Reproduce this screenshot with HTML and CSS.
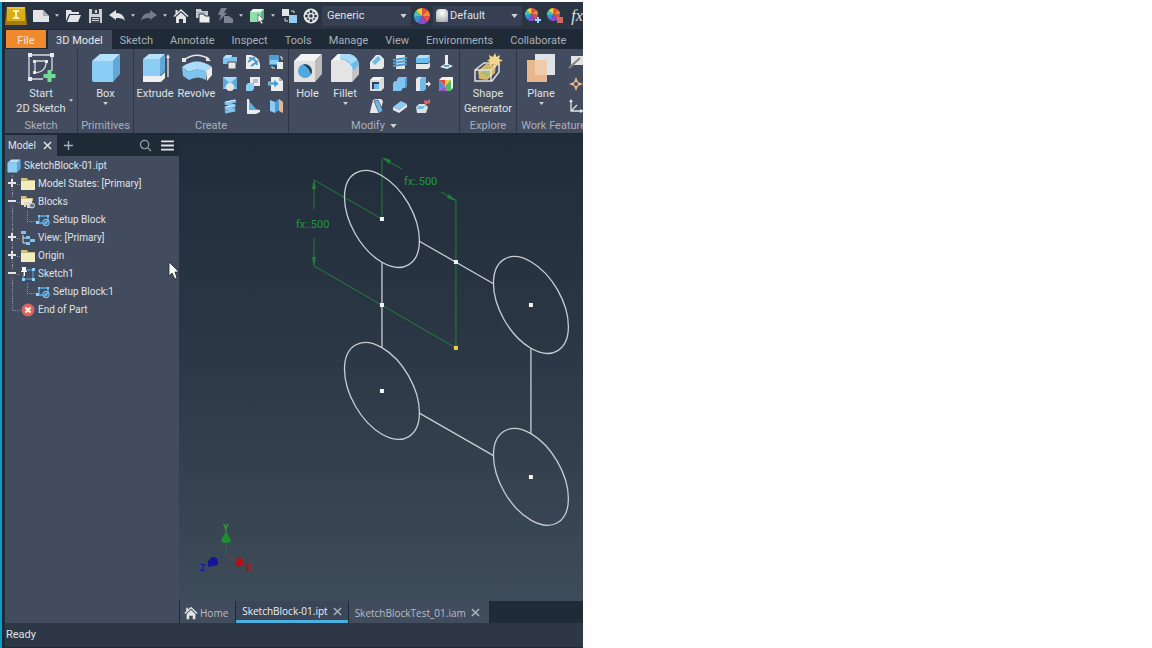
FILE: index.html
```html
<!DOCTYPE html>
<html lang="en">
<head>
<meta charset="utf-8">
<title>SketchBlock-01.ipt</title>
<link rel="stylesheet" href="styles.css">
</head>
<body>
<svg class="defs" aria-hidden="true">
  <defs>
    <symbol id="wheel" viewBox="0 0 16 16">
      <path fill="#e8503c" d="M8 8V0a8 8 0 0 1 5.700 2.300z"/><path fill="#f08a3c" d="M8 8l5.700-5.700A8 8 0 0 1 16 8z"/><path fill="#e84a50" d="M8 8h8a8 8 0 0 1-3 6.200z"/><path fill="#8c4cc8" d="M8 8l5 6.200A8 8 0 0 1 4 15z"/><path fill="#3c8ce0" d="M8 8l-4 7a8 8 0 0 1-4-6z"/><path fill="#3cc8c0" d="M8 8L0 9a8 8 0 0 1 2-6.300z"/><path fill="#f4d03c" d="M8 8L2 2.700A8 8 0 0 1 8 0z"/>
    </symbol>
    <symbol id="cube" viewBox="0 0 30 30">
      <path fill="#b5e2fb" d="M1 8l8-7h20l-7 7z"/><path fill="#8bcdf5" d="M1 8h21v21H3q-2 0-2-2z"/><path fill="#5fa9d8" d="M22 8l7-7v20l-7 8z"/>
    </symbol>
    <symbol id="house" viewBox="0 0 16 16">
      <path fill="none" stroke="#e2e4e6" stroke-width="1.600" d="M1 8.500L8 2l7 6.500"/><path fill="#e2e4e6" d="M3 9l5-4.500L13 9v6h-3v-4H6v4H3zM2.500 2h2v3l-2 2z"/>
    </symbol>
    <symbol id="folder" viewBox="0 0 14 14">
      <path fill="#cdbf80" d="M0 1h6l1 2h7v10H0z"/><path fill="#f3ecbc" d="M0 4h14v9H0z"/>
    </symbol>
    <symbol id="block" viewBox="0 0 14 14">
      <path fill="none" stroke="#55aee6" stroke-width="1.300" d="M3 9V3h9v4M2 10h5"/><path fill="#8fd0f8" d="M0 8h3v3H0zM2 2h2v2H2zM11 2h2v2h-2z"/><circle cx="10" cy="9.500" r="3.300" fill="#3c7fb0" stroke="#7fc4ee"/><path stroke="#d8eefa" d="M8 11.500l4-4"/>
    </symbol>
    <symbol id="caret" viewBox="0 0 8 5"><path fill="#cfd3d8" d="M0 0h8L4 5z"/></symbol>
    <symbol id="cross" viewBox="0 0 10 10"><path fill="none" stroke="currentColor" stroke-width="1.600" d="M1 1l8 8M9 1L1 9"/></symbol>
  </defs>
</svg>

<div class="app">
  <header class="quickbar">
    <button class="logo" aria-label="Application menu"><svg viewBox="0 0 22 20"><path fill="#a67c12" d="M2 1h18l2 18H0z"/><path fill="#d9ad17" d="M2 1h18v14H2z"/><path fill="#efc62d" d="M2 1h18v2H2z"/><path fill="#fff3b8" d="M8 4h6v2h-2v5h2v2H8v-2h2V6H8z"/></svg></button>
    <button class="tool" aria-label="New"><svg viewBox="0 0 16 16"><path fill="#e2e4e6" d="M0 2h10l6 6v6H0z"/><path fill="#a9afb8" d="M10 2v6h6z"/></svg></button>
    <button class="drop" aria-label="New options"><svg><use href="#caret"/></svg></button>
    <button class="tool" aria-label="Open"><svg viewBox="0 0 16 16"><path fill="#e2e4e6" d="M1 13V2h5l1 2h7v2H4zM2 14l3-7h11l-3 7z"/></svg></button>
    <button class="tool" aria-label="Save"><svg viewBox="0 0 16 16"><path fill="#ccd0d5" d="M2 1h13v14H2z"/><path fill="#3a4454" d="M5 1h7v5H5zM4 9h9v6H4z"/><path fill="#ccd0d5" d="M8 2h2v3H8zM5 10h7v1H5zM5 12h7v1H5z"/></svg></button>
    <button class="tool" aria-label="Undo"><svg viewBox="0 0 16 16"><path fill="#e2e4e6" d="M0 7l7-5v3c6 0 8 3 9 8-2-3-5-3-9-3v2z"/></svg></button>
    <button class="drop" aria-label="Undo options"><svg><use href="#caret"/></svg></button>
    <button class="tool" aria-label="Redo"><svg viewBox="0 0 16 16"><path fill="#747c88" d="M16 7L9 2v3c-6 0-8 3-9 8 2-3 5-3 9-3v2z"/></svg></button>
    <button class="drop" aria-label="Redo options"><svg><use href="#caret"/></svg></button>
    <button class="tool" aria-label="Home"><svg><use href="#house"/></svg></button>
    <button class="tool" aria-label="Project folders"><svg viewBox="0 0 16 16"><path fill="#c6cbd1" d="M1 1h5l1 2h6v7H1z"/><path fill="#eceef0" stroke="#2c3645" d="M4 6h5l1 2h5v7H4z"/><path fill="#a4acb6" d="M1 4h10v1H1z"/></svg></button>
    <button class="tool" aria-label="Update"><svg viewBox="0 0 16 16"><path fill="#7b838f" d="M4 0h6L7 5h3L2 13l2-6H1zM7 8h5l4 3v4H7z"/></svg></button>
    <button class="drop" aria-label="Update options"><svg><use href="#caret"/></svg></button>
    <button class="tool" aria-label="Select"><svg viewBox="0 0 16 16"><path fill="#55b878" d="M1 4l3-3h11v10l-3 3H1z"/><path fill="#8fe0a8" d="M1 4h11v10H1z"/><path fill="#e6f6ea" d="M1 4l3-3h11l-3 3z"/><path fill="#fff" stroke="#36404f" stroke-width=".6" d="M9 6l6 6h-3l2 3-2 1-1-3-2 1z"/></svg></button>
    <button class="drop" aria-label="Select options"><svg><use href="#caret"/></svg></button>
    <button class="tool" aria-label="Components"><svg viewBox="0 0 16 16"><path fill="#e2e4e6" d="M1 1h7v7H1z"/><path fill="#93cdf2" d="M8 7h8v8H8z"/><path fill="none" stroke="#d8dce0" d="M4 10v3h3M10 3h3v2"/></svg></button>
    <button class="tool" aria-label="Material browser"><svg viewBox="0 0 16 16"><circle cx="8" cy="8" r="7.500" fill="#e2e4e6"/><g fill="#2d3746"><circle cx="8" cy="8" r="1.700"/><circle cx="8" cy="3.500" r="1.500"/><circle cx="8" cy="12.500" r="1.500"/><circle cx="3.500" cy="8" r="1.500"/><circle cx="12.500" cy="8" r="1.500"/><circle cx="5" cy="5" r="1"/><circle cx="11" cy="5" r="1"/><circle cx="5" cy="11" r="1"/><circle cx="11" cy="11" r="1"/></g></svg></button>
    <span class="combo"><select aria-label="Material"><option>Generic</option></select><svg><use href="#caret"/></svg></span>
    <button class="tool" aria-label="Appearance browser"><svg><use href="#wheel"/></svg></button>
    <span class="combo combo-swatch"><i class="swatch"></i><select aria-label="Appearance"><option>Default</option></select><svg><use href="#caret"/></svg></span>
    <button class="tool" aria-label="Adjust appearance"><svg viewBox="0 0 16 16"><use href="#wheel" width="13" height="13"/><path stroke="#9ed4f6" stroke-width="2" d="M13 9v6M10 12h6"/></svg></button>
    <button class="tool" aria-label="Clear appearance"><svg viewBox="0 0 16 16"><use href="#wheel" width="13" height="13"/><path fill="#cf6a60" d="M10 9h6v6h-6z"/></svg></button>
    <button class="tool fx" aria-label="Parameters">fx</button>
  </header>

  <nav class="tabs">
    <a class="tab file" href="#file">File</a>
    <a class="tab current" href="#model">3D Model</a>
    <a class="tab" href="#sketch">Sketch</a>
    <a class="tab" href="#annotate">Annotate</a>
    <a class="tab" href="#inspect">Inspect</a>
    <a class="tab" href="#tools">Tools</a>
    <a class="tab" href="#manage">Manage</a>
    <a class="tab" href="#view">View</a>
    <a class="tab" href="#environments">Environments</a>
    <a class="tab" href="#collaborate">Collaborate</a>
    <a class="tab" href="#inventor">Electromechanical</a>
  </nav>

  <section class="ribbon">
    <div class="panel p-sketch">
      <div class="body">
        <button class="big"><svg viewBox="0 0 30 30"><g fill="none" stroke="#d9dce0" stroke-width="1.300"><path d="M4 2h22v16M3 4v22h14"/><path d="M9 8h11v3q-1 8-11 9z"/></g><path fill="#e8eaec" d="M2 0h4v4H2zM24 0h4v4h-4zM2 24h4v4H2zM7 7h3v3H7zM19 7h3v3h-3zM7 18h3v3H7z"/><path stroke="#6fdc94" stroke-width="4" d="M23.500 17v12M17.500 23h12"/></svg><span>Start<br>2D Sketch</span></button>
        <svg class="side-caret"><use href="#caret"/></svg>
      </div>
      <div class="name">Sketch</div>
    </div>
    <div class="panel p-prim">
      <div class="body">
        <button class="big"><svg><use href="#cube"/></svg><span>Box</span><svg class="down"><use href="#caret"/></svg></button>
      </div>
      <div class="name">Primitives</div>
    </div>
    <div class="panel p-create">
      <div class="body">
        <button class="big w40"><svg viewBox="0 0 30 30"><path fill="#efefef" d="M3 23h18l4-4v6l-4 4H3z"/><path fill="#b5e2fb" d="M3 6l6-5h16l-5 5z"/><path fill="#8bcdf5" d="M3 6h17v17H3z"/><path fill="#5fa9d8" d="M20 6l5-5v17l-5 5z"/><path stroke="#e6e8ea" stroke-width="1.300" d="M28 4v20"/><path fill="#e6e8ea" d="M26 5l2-4 2 4z"/></svg><span>Extrude</span></button>
        <button class="big w43"><svg viewBox="0 0 30 30"><path fill="none" stroke="#e6e8ea" stroke-width="1.500" d="M2 7Q14-2 27 6"/><path fill="#e6e8ea" d="M0 5h4v4H0zM24 3l5 5-5 0z"/><path fill="#a9dcfa" d="M0 14q15-11 30 0l-6 5q-9-5-17 0z"/><path fill="#7fc4ee" d="M0 14l7 5q8-5 17 0v8q-8-5-17 0l-6-4z"/><path fill="#ececec" d="M24 18l6-4v8l-5 6z"/></svg><span>Revolve</span></button>
        <div class="grid">
          <button class="mini" aria-label="Sweep"><svg viewBox="0 0 16 16"><path fill="#7fc4ee" d="M1 4l3-3h6v2h5v5l-2 2H1z"/><path fill="#b5e2fb" d="M1 4l3-3h6L8 4z"/><path fill="#e8e8e8" stroke="#434c5f" d="M6 8h8v7H6z"/></svg></button>
          <button class="mini" aria-label="Emboss"><svg viewBox="0 0 16 16"><path fill="#ececec" d="M1 1h5q8 2 9 9v5H1z"/><path fill="none" stroke="#4a9ed2" stroke-width="2" d="M4 4q7 0 8 7M3 8l7-5M6 12l7-5"/></svg></button>
          <button class="mini" aria-label="Derive"><svg viewBox="0 0 16 16"><path fill="#4a9ed2" d="M1 1h10v10H1z"/><path fill="#8bcdf5" d="M2 6h8v4H2z"/><path fill="#ececec" d="M9 8h6v7H9z"/><path fill="none" stroke="#e6e8ea" d="M12 3h2v3M4 12v2h3"/></svg></button>
          <button class="mini" aria-label="Loft"><svg viewBox="0 0 16 16"><path fill="#8bcdf5" d="M1 1h14v12H1z"/><path fill="#5fa9d8" d="M1 1l7 7 7-7v12l-3-3H4l-3 3z"/><path fill="#a9dcfa" d="M1 1h14L8 6z"/><circle cx="8" cy="11" r="4" fill="#e4e4e4"/></svg></button>
          <button class="mini" aria-label="Decal"><svg viewBox="0 0 16 16"><path fill="#ececec" d="M5 1h10v9H9V7H5z"/><path fill="#8bcdf5" d="M1 9l2-2h6v6l-2 2H1z"/><path fill="#b9bec6" d="M8 3h5v4H8z"/></svg></button>
          <button class="mini" aria-label="Import"><svg viewBox="0 0 16 16"><path fill="#ececec" d="M3 1h8l4 4v10H3z"/><path fill="#a9afb8" d="M11 1v4h4z"/><path fill="#4a9ed2" stroke="#fff" stroke-width=".5" d="M0 6h6V3l5 5-5 4V9H0z"/></svg></button>
          <button class="mini" aria-label="Coil"><svg viewBox="0 0 16 16"><path fill="none" stroke="#7fc4ee" stroke-width="3" d="M14 3L3 5l10 3-10 2 10 2-10 2"/><path stroke="#d9f0fd" d="M13 2L4 4M13 7L4 9"/></svg></button>
          <button class="mini" aria-label="Rib"><svg viewBox="0 0 16 16"><path fill="#ececec" d="M2 1h2l2 10 9 1v2l-4 2H2z"/><path fill="#5fb0e2" d="M4 3l8 9H4z"/></svg></button>
          <button class="mini" aria-label="Unwrap"><svg viewBox="0 0 16 16"><path fill="#8bcdf5" d="M2 2l5 2v11l-5-2z"/><path fill="#4a9ed2" d="M7 4l4-3v11l-4 3z"/><path fill="#e9b78e" d="M11 1l4 3v11l-4-2z"/></svg></button>
        </div>
      </div>
      <div class="name">Create</div>
    </div>
    <div class="panel p-modify">
      <div class="body">
        <button class="big w34"><svg viewBox="0 0 30 30"><path fill="#f4f4f4" d="M1 8l7-7h21l-7 7z"/><path fill="#e2e2e2" d="M1 8h21v21H1z"/><path fill="#bcbcbc" d="M22 8l7-7v20l-7 8z"/><circle cx="12" cy="18" r="7" fill="#4fa8de"/><path fill="#2a3c52" d="M10 11.500a7 7 0 0 1 8 10q-2-7-8-10z"/></svg><span>Hole</span></button>
        <button class="big w41"><svg viewBox="0 0 30 30"><path fill="#e4e4e4" d="M1 8l7-7h10q10 2 11 11v9l-7 8H1z"/><path fill="#c4c4c4" d="M22 18l7-6v9l-7 8z"/><path fill="#f2f2f2" d="M1 8l7-7h6l-4 6z"/><path fill="#6fbcec" d="M11 1h8q9 2 10 11l-6 6Q22 8 10 6z"/><path fill="#a9dcfa" d="M11 1h8q6 1 8 6l-6 4Q18 6 10 6z"/></svg><span>Fillet</span><svg class="down"><use href="#caret"/></svg></button>
        <div class="grid four">
          <button class="mini" aria-label="Chamfer"><svg viewBox="0 0 16 16"><path fill="#e8e8e8" d="M1 8l6-7h4l4 4v8l-2 2H1z"/><path fill="#6fbcec" d="M3 8l6-6 3 3-6 6z"/></svg></button>
          <button class="mini" aria-label="Thread"><svg viewBox="0 0 16 16"><path fill="#e4e4e4" d="M4 1h9v14H4z"/><path stroke="#4a9ed2" stroke-width="2" d="M1 6l14-2M1 9l14-2M1 12l14-2"/></svg></button>
          <button class="mini" aria-label="Split"><svg viewBox="0 0 16 16"><path fill="#b5e2fb" d="M1 4l3-3h11l-2 3z"/><path fill="#6fbcec" d="M1 4h12l2-3v6l-2 2H1z"/><path fill="#e8e8e8" d="M1 10h12l2-2v5l-2 2H1z"/></svg></button>
          <button class="mini" aria-label="Direct edit"><svg viewBox="0 0 16 16"><path fill="#ececec" d="M7 1h3v9l5 2-6 3-7-2 5-3z"/><path fill="#4a9ed2" d="M6 11h5v2H6z"/></svg></button>
          <button class="mini" aria-label="Shell"><svg viewBox="0 0 16 16"><path fill="#f2f2f2" d="M1 4l3-3h11l-3 3z"/><path fill="#dcdcdc" d="M1 4h11v11H1zM12 4l3-3v11l-3 3z"/><path fill="#2f4258" d="M3 6h7v7H3z"/><path fill="#6fbcec" d="M5 8h5v5H5z"/></svg></button>
          <button class="mini" aria-label="Combine"><svg viewBox="0 0 16 16"><path fill="#7fc4ee" d="M5 3l2-2h8v9l-2 2h-2l-2 3H1V7l2-2h2z"/><path fill="#4a9ed2" d="M13 3l2-2v9l-2 2z"/></svg></button>
          <button class="mini" aria-label="Move face"><svg viewBox="0 0 16 16"><path fill="#e8e8e8" d="M1 3l2-2h4v12l-2 2H1z"/><path fill="#6fbcec" d="M5 3l2-2h4v12l-2 2H5z"/><path fill="#ececec" d="M11 7h2V5l3 3-3 3V9h-2z"/></svg></button>
          <button class="mini" aria-label="Finish"><svg viewBox="0 0 16 16"><path fill="#f2f2f2" d="M1 4l3-3h11v11l-3 3H1z"/><path fill="#e84a3c" d="M1 4h6v6z"/><path fill="#f4c83c" d="M7 4h6l-6 6z"/><path fill="#4a90e0" d="M1 4l6 6-6 5z"/><path fill="#a650c8" d="M1 15l6-5 2 5z"/><path fill="#52bc62" d="M13 4v11H9l-2-5z"/></svg></button>
          <button class="mini" aria-label="Draft"><svg viewBox="0 0 16 16"><path fill="#e8e8e8" d="M1 14L4 2l3-1h5l2 2-3 12H1z"/><path fill="#6fbcec" stroke="#33465d" stroke-width=".7" d="M5 3l4-1 5 11-4 2z"/></svg></button>
          <button class="mini" aria-label="Thicken"><svg viewBox="0 0 16 16"><path fill="#8bcdf5" d="M1 9l8-6 6 3-8 6z"/><path fill="#e8e8e8" d="M1 9l6 3 8-6v3l-8 6-6-3z"/></svg></button>
          <button class="mini" aria-label="Delete face"><svg viewBox="0 0 16 16"><path fill="#e0e0e0" d="M1 9l3-3h6l3 3-2 6H2z"/><path fill="#6fbcec" d="M3 8h7l-2 3H2z"/><path fill="#d9695e" d="M9 2l3 1 3-2v5l-2-1-3 3z"/></svg></button>
        </div>
      </div>
      <div class="name">Modify <svg class="name-caret"><use href="#caret"/></svg></div>
    </div>
    <div class="panel p-explore">
      <div class="body">
        <button class="big"><svg viewBox="0 0 30 30"><path fill="#d9b86a" d="M5 18l8-7 10 1-1 8-8 7-8-1z"/><path fill="#a8c070" d="M8 20l6-6 5 5-5 5z"/><path fill="none" stroke="#dfe2e6" stroke-width="1.500" d="M2 17l9-7h15v9l-7 9H2zM2 17h16l8-7M18 17v11"/><path fill="#f6d78e" d="M22 0l1.500 4L27 2l-1 4 4 1.500L26 9l1 4-4-2-1.500 3L20 11l-4 2 1-4-3-1.500L17 6l-1-4 4 2z"/></svg><span>Shape<br>Generator</span></button>
      </div>
      <div class="name">Explore</div>
    </div>
    <div class="panel p-work">
      <div class="body">
        <button class="big w48"><svg viewBox="0 0 30 30"><path fill="#dfe2e6" d="M9 1h20v21H9z"/><path fill="#e9b78e" d="M1 7h20v22H1z"/><path fill="#f0cdaa" d="M9 7h12v15H9z"/></svg><span>Plane</span><svg class="down"><use href="#caret"/></svg></button>
        <div class="grid one">
          <button class="mini" aria-label="Axis"><svg viewBox="0 0 16 16"><path fill="#e0e3e6" d="M3 2h13v9H3z"/><path stroke="#8d857b" stroke-width="2" d="M1 14L12 4"/></svg></button>
          <button class="mini" aria-label="Point"><svg viewBox="0 0 16 16"><path fill="#eebc8c" d="M8 1l2 5 5 2-5 2-2 5-2-5-5-2 5-2z"/><circle cx="8" cy="8" r="2" fill="#434c5f"/></svg></button>
          <button class="mini" aria-label="Coordinate system"><svg viewBox="0 0 16 16"><path fill="none" stroke="#e0e3e6" stroke-width="1.300" d="M3 2v11h11M3 13l6-6"/><path fill="#e0e3e6" d="M1 4l2-3 2 3zM12 11l4 2-4 2z"/></svg></button>
        </div>
      </div>
      <div class="name">Work Features</div>
    </div>
  </section>

  <div class="workspace">
    <aside class="browser">
      <div class="browser-head">
        <div class="browser-tab">Model<button aria-label="Close Model panel"><svg><use href="#cross"/></svg></button></div>
        <button class="add" aria-label="Add panel"><svg viewBox="0 0 10 10"><path stroke="#a9afb8" stroke-width="1.500" d="M5 0v10M0 5h10"/></svg></button>
        <button class="find" aria-label="Search"><svg viewBox="0 0 14 14"><circle cx="6" cy="6" r="4.500" fill="none" stroke="#9aa1ab" stroke-width="1.300"/><path stroke="#9aa1ab" stroke-width="1.300" d="M9 9l4 4"/></svg></button>
        <button class="menu" aria-label="Panel menu"><svg viewBox="0 0 14 12"><path stroke="#e2e4e6" stroke-width="2" d="M0 1.500h14M0 6h14M0 10.500h14"/></svg></button>
      </div>
      <ul class="tree">
        <li class="root"><svg><use href="#cube"/></svg>SketchBlock-01.ipt</li>
        <li class="stem"><button class="plus" aria-label="Expand Model States"></button><svg><use href="#folder"/></svg>Model States: [Primary]</li>
        <li class="stem"><button aria-label="Collapse Blocks"></button><svg viewBox="0 0 14 14"><path fill="#cdbf80" d="M0 1h5l1 2h6v3H0z"/><path fill="#f3ecbc" d="M0 4h11v6H0z"/><path fill="#d5d8dc" d="M3 7h7v2H5v3H3zM6 10h5v3H6z"/><circle cx="11" cy="10.500" r="2.500" fill="#6b7482" stroke="#dfe2e6"/></svg>Blocks</li>
        <li class="stem child"><svg><use href="#block"/></svg>Setup Block</li>
        <li class="stem"><button class="plus" aria-label="Expand View"></button><svg viewBox="0 0 14 14"><path fill="none" stroke="#dfe2e6" d="M2 4v8h3M2 7h7"/><path fill="#7fc4ee" d="M0 0h5v3H0zM5 5h4v3H5zM9 8h5v3H9zM5 11h4v3H5z"/></svg>View: [Primary]</li>
        <li class="stem"><button class="plus" aria-label="Expand Origin"></button><svg><use href="#folder"/></svg>Origin</li>
        <li class="stem"><button aria-label="Collapse Sketch1"></button><svg viewBox="0 0 14 14"><path fill="none" stroke="#55aee6" d="M3 3h9v9H2z"/><path fill="#8fd0f8" d="M11 1h3v3h-3zM11 11h3v3h-3zM1 11h3v3H1z"/><path fill="#fff" d="M1 0h4v4h1v1H4v4H3V5H0V4h1z"/></svg>Sketch1</li>
        <li class="stem child"><svg><use href="#block"/></svg>Setup Block:1</li>
        <li class="stem last"><svg viewBox="0 0 14 14"><circle cx="7" cy="7" r="6.500" fill="#dc6460"/><path stroke="#fff3dc" stroke-width="2.200" d="M4.500 4.500l5 5M9.500 4.500l-5 5"/></svg>End of Part</li>
      </ul>
      <svg class="pointer" viewBox="0 0 12 19"><path fill="#fff" stroke="#20262e" stroke-width=".8" d="M1 1v14l3-3 3 6 2-1-2-6h4z"/></svg>
    </aside>

    <main class="view">
      <div class="canvas">
        <svg viewBox="179 135 404 466" role="img" aria-label="Sketch with four circles">
          <g fill="none" stroke="#1f7f38">
            <path d="M382 219V158M456 348V200M314 180l68 39M314 266l142 82"/>
            <path d="M384 159l18 10M441 192l15 8M314 182v27M314 238v27"/>
          </g>
          <path fill="#1f7f38" d="M382 157l9 3-2 4zM456 201l-9-3 2-4zM314 179l-2 10h4zM314 267l-2-10h4z"/>
          <g fill="none" stroke="#c9cdd3" stroke-width="1.300">
            <ellipse cx="382" cy="219" rx="53" ry="30.600" transform="rotate(60 382 219)"/>
            <ellipse cx="531" cy="305" rx="53" ry="30.600" transform="rotate(60 531 305)"/>
            <ellipse cx="382" cy="391" rx="53" ry="30.600" transform="rotate(60 382 391)"/>
            <ellipse cx="531" cy="477" rx="53" ry="30.600" transform="rotate(60 531 477)"/>
            <path d="M382 262v86M531 348v86M419 241l75 43M419 413l75 43"/>
          </g>
          <path fill="#f4f4f4" d="M380 217h4v4h-4zM529 303h4v4h-4zM380 389h4v4h-4zM529 475h4v4h-4zM380 303h4v4h-4zM454 260h4v4h-4z"/>
          <path fill="#ecd050" d="M454 346h4v4h-4z"/>
          <g class="dim"><text x="404" y="185">fx:.500</text><text x="296" y="228">fx:.500</text></g>
          <g class="axes">
            <path stroke="#2f6a3e" d="M226 555v-14"/><path stroke="#2c4470" d="M226 555l-10 5"/><path stroke="#743944" d="M226 555l11 6"/>
            <path fill="#1f8c34" d="M226 531l5 9q0 3-5 3t-5-3z"/>
            <path fill="#14149a" d="M212 557q6 0 6 5v3l-10 2v-6z"/>
            <path fill="#b01212" d="M238 557q5 0 6 8-5 3-9 0z"/>
            <text x="223" y="531" fill="#2fa038">Y</text><text x="200" y="571" fill="#1616a4">Z</text><text x="246" y="571" fill="#b01212">X</text>
          </g>
        </svg>
      </div>
      <nav class="docs">
        <a class="doc home" href="#home"><svg><use href="#house"/></svg>Home</a>
        <div class="doc active"><a href="#part">SketchBlock-01.ipt</a><button aria-label="Close SketchBlock-01.ipt"><svg><use href="#cross"/></svg></button></div>
        <div class="doc"><a href="#assembly">SketchBlockTest_01.iam</a><button aria-label="Close SketchBlockTest_01.iam"><svg><use href="#cross"/></svg></button></div>
      </nav>
    </main>
  </div>
  <footer class="status">Ready</footer>
</div>
</body>
</html>
```
FILE: styles.css
```css
* { box-sizing: border-box; }
body {
  margin: 0;
  padding-top: 2px;
  background: #fefefe;
  font: 11px/16px Roboto, "Open Sans", sans-serif;
  color: #dfe2e6;
}
button, select { font: inherit; color: inherit; background: none; border: 0; padding: 0; margin: 0; }
button { display: flex; align-items: center; justify-content: center; flex: none; }
a { color: inherit; text-decoration: none; }
svg { display: block; flex: none; }
.defs { position: absolute; width: 0; height: 0; }

.app {
  display: flex;
  flex-direction: column;
  width: 50.6%;
  min-height: calc(100vh - 2px);
  padding-left: 3px;
  border-left: 2px solid #0f9cc4;
  background: #1f2a37;
  overflow: hidden;
}

.quickbar { display: flex; align-items: center; height: 27px; background: #2a3443; }
.logo { width: 22px; margin-right: 3px; }
.logo svg { width: 22px; height: 20px; }
.tool { width: 22px; height: 26px; }
.tool svg { width: 16px; height: 16px; }
.drop { width: 10px; height: 26px; }
.drop svg { width: 4px; height: 3px; }
.combo { display: flex; flex: none; align-items: center; width: 89px; height: 20px; padding: 0 4px 0 5px; background: #364052; }
.combo select { flex: 1; min-width: 0; appearance: none; }
.combo svg { width: 7px; height: 4px; pointer-events: none; }
.combo-swatch { padding-left: 3px; gap: 2px; }
.swatch { width: 12px; height: 13px; border-radius: 4px 4px 1px 1px; background: radial-gradient(circle at 50% 30%, #fff, #9da1a7); }
.fx { font: italic 16px "Liberation Serif", serif; }

.tabs { display: flex; height: 19px; margin-top: 1px; padding-left: 1px; color: #aab0b8; white-space: nowrap; }
.tab { flex: none; padding: 0 9px 0 8px; line-height: 22px; }
.tab.file { width: 40px; margin-right: 2px; padding: 0; text-align: center; background: #f08a2c; color: #fbe6cf; height: 18px; }
.tab.current { background: #434c5f; color: #e6e8ea; }

.ribbon { display: flex; height: 84px; background: #434c5f; overflow: hidden; }
.panel { display: flex; flex: none; flex-direction: column; border-right: 1px solid #2d3646; }
.body { display: flex; flex: 1; justify-content: center; padding-top: 2px; }
.name { display: flex; align-items: center; justify-content: center; gap: 5px; color: #a9afb9; line-height: 15px; white-space: nowrap; }
.name-caret { width: 7px; height: 4px; }
.p-sketch { position: relative; width: 73px; }
.p-prim { width: 56px; }
.p-create { width: 155px; }
.p-modify { width: 171px; }
.p-explore { width: 57px; }
.p-work { width: 80px; }
.p-work .body { justify-content: flex-start; }
.big { flex-direction: column; justify-content: flex-start; padding-top: 2px; line-height: 15px; white-space: nowrap; }
.big svg { width: 30px; height: 30px; margin-bottom: 3px; }
.big .down { width: 5px; height: 3px; margin-top: 1px; }
.side-caret { position: absolute; right: 4px; top: 50px; width: 4px; height: 3px; }
.w34 { width: 34px; }
.w40 { width: 40px; }
.w41 { width: 41px; }
.w43 { width: 43px; }
.w48 { width: 48px; }
.grid { display: grid; grid-template-columns: repeat(3, 23px); grid-auto-rows: 22px; }
.grid.four { grid-template-columns: repeat(4, 23px); }
.grid.one { grid-template-columns: 22px; }
.mini svg { width: 16px; height: 16px; }

.workspace { display: flex; flex: 1; padding-top: 2px; }
.browser { position: relative; display: flex; flex: none; flex-direction: column; width: 174px; background: #434c5f; }
.browser-head { display: flex; align-items: center; height: 21px; background: #202b38; }
.browser-tab { display: flex; align-items: center; gap: 7px; width: 52px; height: 21px; padding-left: 3px; background: #434c5f; font-size: 10px; }
.browser-tab svg { width: 9px; height: 9px; }
.add { width: 22px; }
.add svg { width: 9px; height: 9px; }
.find { width: 22px; margin-left: auto; }
.find svg { width: 13px; height: 13px; }
.menu { width: 22px; margin-right: 1px; }
.menu svg { width: 13px; height: 11px; }
.tree { margin: 0; padding: 1px 0 0; list-style: none; font-size: 10px; }
.tree li { position: relative; display: flex; align-items: center; gap: 3px; height: 18px; padding-left: 16px; white-space: nowrap; }
.tree li svg { width: 14px; height: 14px; }
.tree .root { padding-left: 2px; }
.tree .child { padding-left: 31px; }
.stem::before { content: ""; position: absolute; left: 7px; top: 0; height: 18px; border-left: 1px dotted #88909c; }
.stem::after { content: ""; position: absolute; left: 8px; top: 9px; width: 7px; border-top: 1px dotted #88909c; }
.child::after { left: 22px; top: 0; width: 8px; height: 10px; border-top: 0; border-left: 1px dotted #88909c; border-bottom: 1px dotted #88909c; }
.last::before { height: 9px; }
.stem button { position: absolute; left: 3px; top: 4px; z-index: 1; width: 8px; height: 8px; background: linear-gradient(#e2e4e6, #e2e4e6) center / 8px 2px no-repeat #434c5f; }
.stem .plus { background: linear-gradient(#e2e4e6, #e2e4e6) center / 8px 2px no-repeat, linear-gradient(#e2e4e6, #e2e4e6) center / 2px 8px no-repeat #434c5f; }
.pointer { position: absolute; left: 163px; top: 126px; z-index: 2; width: 12px; height: 19px; }

.view { display: flex; flex: 1; flex-direction: column; min-width: 0; }
.canvas { display: flex; flex: 1; min-height: 0; background: linear-gradient(#202c39, #2c3745 45%, #3e4b59); }
.canvas svg { flex: 1; width: 100%; min-width: 0; }
.dim { fill: #20963a; font-size: 11px; }
.axes { font-size: 9px; font-weight: bold; }
.docs { display: flex; height: 22px; padding-left: 1px; gap: 1px; background: #1f2b37; font: 10px/16px "Open Sans", sans-serif; }
.doc { display: flex; align-items: center; gap: 5px; padding: 2px 9px 0 6px; background: #414c5c; color: #b9bfc7; white-space: nowrap; }
.doc svg { width: 9px; height: 9px; }
.doc button { color: #aeb4bd; }
.doc.home { gap: 2px; padding: 2px 7px 0 4px; }
.doc.home svg { width: 14px; height: 14px; }
.doc.active { padding: 2px 6px 0; background: #3b4658; color: #f0f2f4; border-bottom: 3px solid #4bafe0; }

.status { height: 26px; padding-left: 1px; line-height: 24px; background: #2d3745; border-bottom: 2px solid #1f2936; }
```
